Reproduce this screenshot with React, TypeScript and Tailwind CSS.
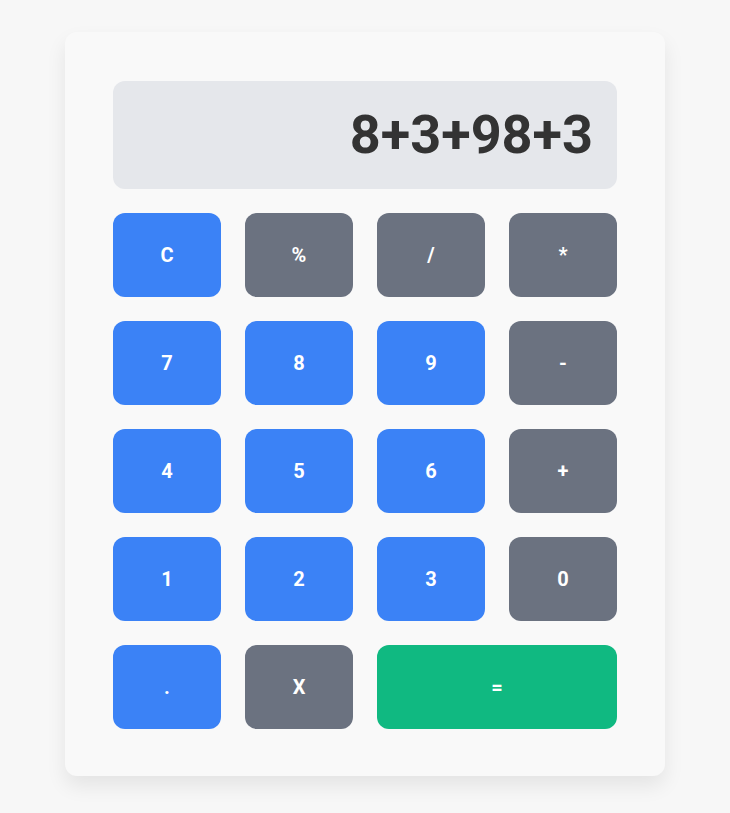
import React from "react";

const blue = "bg-[#3b82f6]";
const gray = "bg-[#6b7280]";

const rows: { label: string; cls: string; span?: boolean }[] = [
  { label: "C", cls: blue },
  { label: "%", cls: gray },
  { label: "/", cls: gray },
  { label: "*", cls: gray },
  { label: "7", cls: blue },
  { label: "8", cls: blue },
  { label: "9", cls: blue },
  { label: "-", cls: gray },
  { label: "4", cls: blue },
  { label: "5", cls: blue },
  { label: "6", cls: blue },
  { label: "+", cls: gray },
  { label: "1", cls: blue },
  { label: "2", cls: blue },
  { label: "3", cls: blue },
  { label: "0", cls: gray },
  { label: ".", cls: blue },
  { label: "X", cls: gray },
  { label: "=", cls: "bg-[#10b981]", span: true },
];

export default function App() {
  return (
    <div
      className="min-h-[813px] w-full bg-[#f7f7f7] flex justify-center pt-8"
      style={{ fontFamily: "Roboto, 'Liberation Sans', sans-serif" }}
    >
      <div className="w-[600px] h-[744px] bg-[#f9f9f9] rounded-xl shadow-[0_10px_20px_rgba(0,0,0,0.08)] px-12 pt-[49px]">
        <div className="h-[108px] bg-[#e5e7eb] rounded-xl flex items-center justify-end px-6">
          <span className="text-[54px] font-bold text-[#333333] leading-none">8+3+98+3</span>
        </div>
        <div className="grid grid-cols-4 gap-6 mt-6">
          {rows.map((b) => (
            <button
              key={b.label}
              className={`${b.cls} ${b.span ? "col-span-2" : ""} h-[84px] rounded-xl text-white text-xl font-bold flex items-center justify-center`}
            >
              {b.label}
            </button>
          ))}
        </div>
      </div>
    </div>
  );
}
